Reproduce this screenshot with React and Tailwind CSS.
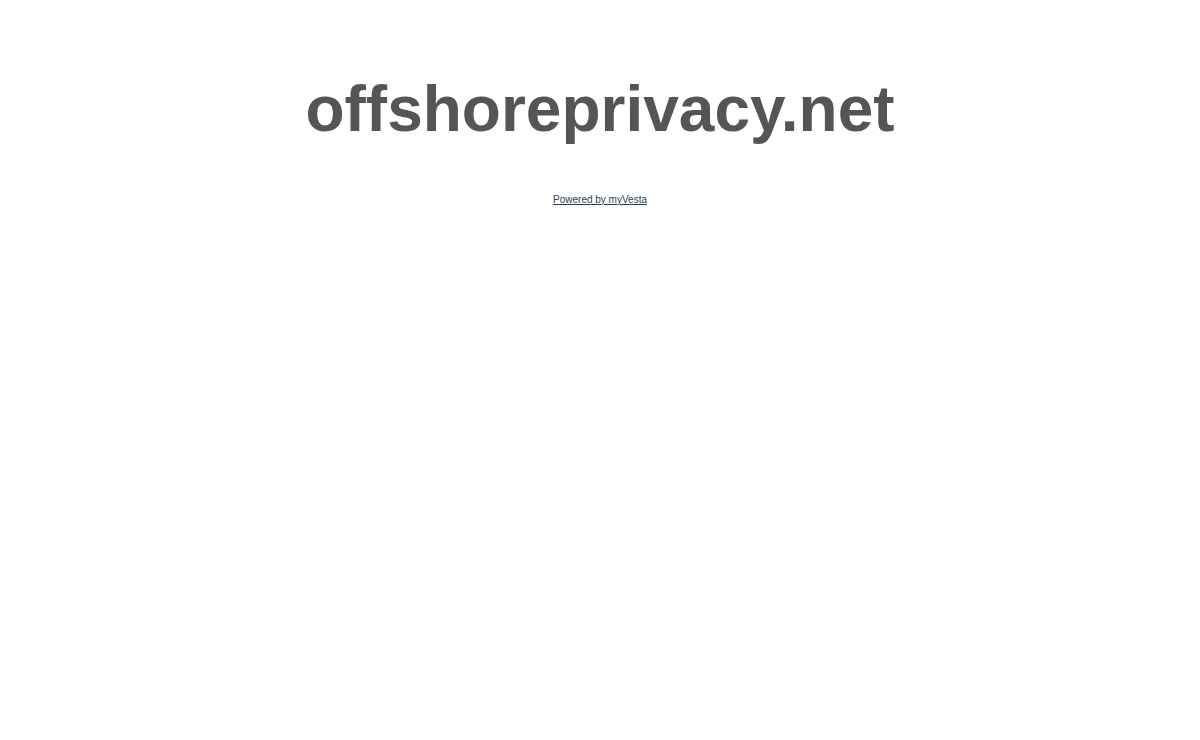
import React from 'react';

const App = () => {
  return (
    <div className="min-h-screen bg-white font-['Liberation_Sans',Arial,sans-serif] text-center">
      <h1 className="pt-[73px] text-[64px] leading-[1.15] font-bold text-[#555555]">
        offshoreprivacy.net
      </h1>
      <p className="mt-[47px] text-[10px] leading-[1.15]">
        <a href="#" className="text-[#2c3e50] underline">
          Powered by myVesta
        </a>
      </p>
    </div>
  );
};

export default App;
